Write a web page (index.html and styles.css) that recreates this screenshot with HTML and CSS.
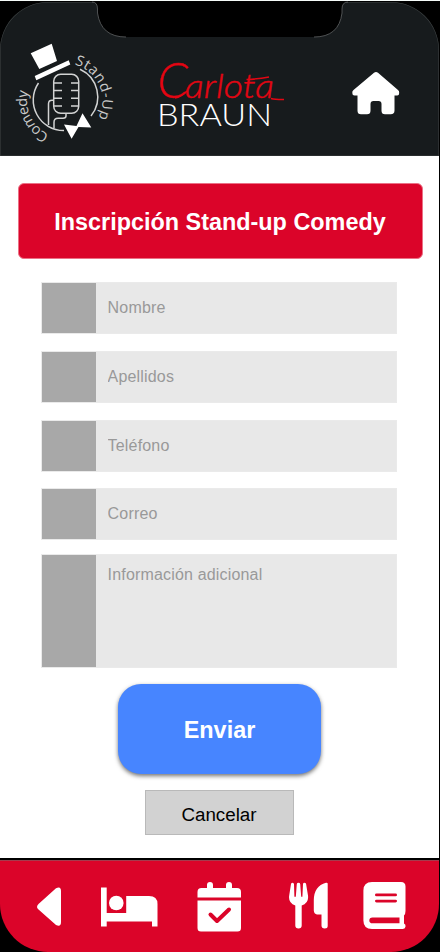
FILE: index.html
```html
<!DOCTYPE html>
<html lang="es">
<head>
<meta charset="utf-8">
<title>Inscripción Stand-up Comedy</title>
<link rel="stylesheet" href="styles.css">
</head>
<body>
<div class="phone">
  <header class="header">
    <svg class="comedy-logo" viewBox="10 35 110 115" aria-label="Stand-Up Comedy">
      <defs>
        <path id="arc-right" d="M74.500 64.500A37.500 37.500 0 0 1 96.500 121"/>
        <path id="arc-left" d="M49 134.500A38 38 0 0 1 29 88"/>
      </defs>
      <g fill="none" stroke="#d2d3d3" stroke-width="1.5">
        <path d="M80 69.2A30.5 30.5 0 0 1 91 116M64 130.6A30.5 30.5 0 0 1 38.5 83"/>
        <rect x="53.7" y="74.3" width="25" height="39" rx="7"/>
        <path d="M54 83h8M54 90.4h8M54 98.3h8M54 106h8M71 83h8M71 90.4h8M71 98.3h8M71 106h8"/>
        <path d="M54 100.3h-2q-3.5 0-3.5 3.5V125M66 113.5v2.500q0 2.200-3 2.200h-5q-4 0-4 4v6"/>
      </g>
      <g fill="#fff">
        <path d="M30.7 53.3 51.7 43.7 57 61 39.3 69ZM34.7 76 68.7 60.3 70.3 64.5 36.3 80.3Z"/>
        <path d="M64 124.5 76.5 126 82.5 113.3 91.3 127.4 78.5 127 71.6 138.8Z"/>
      </g>
      <text class="ring-text"><textPath href="#arc-right" textLength="67" lengthAdjust="spacing">Stand-Up</textPath></text>
      <text class="ring-text"><textPath href="#arc-left" textLength="52" lengthAdjust="spacing">Comedy</textPath></text>
    </svg>
    <svg class="brand" viewBox="155 55 132 76" aria-label="Carlota Braun">
      <text class="brand-first" y="98.300"><tspan class="brand-cap" x="157.500" textLength="31" lengthAdjust="spacingAndGlyphs">C</tspan><tspan class="brand-rest" x="185" textLength="89" lengthAdjust="spacingAndGlyphs">arlota</tspan></text>
      <path class="swash" d="M175 98Q181 97 187 91M271 98.500Q275 99.600 284 99.500M246.500 79.500Q258 79 269 77"/>
      <text class="brand-last" x="157" y="125.500" textLength="115" lengthAdjust="spacingAndGlyphs">BRAUN</text>
    </svg>
    <svg class="home" viewBox="352 71 48 44">
      <path fill="#fff" d="M374 72.7q2-1.6 4 0L398 90q1.4 1.2 1.2 3 0 2.5-2 2.500H394.500V110.500q0 3.800-3.800 3.800H385q-3.500 0-3.500-3.500V104q0-3-3-3H373.500q-3 0-3 3V110.800q0 3.500-3.500 3.500H361q-3.500 0-3.500-3.500V95.500H354.500q-2.200 0-2.200-2.500-.2-1.800 1.200-3Z"/>
    </svg>
    <svg class="notch" viewBox="0 0 256 38">
      <path d="M0 0H256V2Q250 2 250 9V13Q247 37 222 37H34Q9 37 5.500 13V9Q5.500 2 0 2Z" fill="#000"/>
      <path d="M0 2Q5.500 2 5.500 9V13Q9 37 34 37M222 37Q247 37 250 13V9Q250 2 256 2" fill="none" stroke="#6c6f70" stroke-width=".7"/>
    </svg>
  </header>
  <main class="content">
    <h1 class="title">Inscripción Stand-up Comedy</h1>
    <form class="form">
      <label class="field"><span class="swatch"></span><input type="text" placeholder="Nombre"></label>
      <label class="field"><span class="swatch"></span><input type="text" placeholder="Apellidos"></label>
      <label class="field"><span class="swatch"></span><input type="text" placeholder="Teléfono"></label>
      <label class="field"><span class="swatch"></span><input type="text" placeholder="Correo"></label>
      <label class="field area"><span class="swatch"></span><textarea placeholder="Información adicional"></textarea></label>
      <button class="send" type="button">Enviar</button>
      <button class="cancel" type="button">Cancelar</button>
    </form>
  </main>
  <nav class="tabs">
    <svg class="back" viewBox="37 887 24 39"><path fill="#fff" d="M56 888.300q5-2.500 5 2.700V922q0 5.500-5 3L38.500 909.500Q35.500 907 38.500 904Z"/></svg>
    <svg class="bed" viewBox="101 887 57 40"><path fill="#fff" d="M101 887.500h5.700V913h19.500V896H149q8.500 0 8.500 8V926.500H152V921.500H106.700V926.500H101Z"/><circle cx="116.300" cy="903" r="7.300" fill="#fff"/></svg>
    <svg class="calendar" viewBox="197 882 45 50"><path fill="#fff" d="M197.500 897.500V892q0-4 4-4H207V885q0-3 3-3t3 3v3h13v-3q0-3 3-3t3 3v3h5q4 0 4 4v5.500ZM197.500 900.500H241V928q0 3.500-3.500 3.500H201q-3.500 0-3.500-3.500Z"/><path d="M210.500 914.500l6.500 6.500L229 909.500" fill="none" stroke="#db0429" stroke-width="4" stroke-linecap="round" stroke-linejoin="round"/></svg>
    <svg class="cutlery" viewBox="289 882 39 47"><path fill="#fff" d="M291 884q.3-1.300 1.500-1.300 1.500 0 1.500 1.500l.4 12.500h1.400L296.800 884q.2-1.300 1.700-1.300t1.700 1.300L301.200 896.700h1.200L303 884q.1-1.300 1.500-1.300 1.300 0 1.600 1.300l1.900 11.500Q309 903 301.700 905.500V925.500q0 3-3.200 3t-3.200-3V905.500Q288 903 289.200 895.500ZM327.700 883.500V926q0 2.500-3 2.500-3.200 0-3.200-3V914.500H317q-3-.5-3.200-4V900Q314 886 326 882.700q1.700-.2 1.700.8Z"/></svg>
    <svg class="book" viewBox="363 882 43 47"><path fill="#fff" d="M372 882h29q4.500 0 4.500 4.500V911q0 3-1.500 4.500v8q2 1 1.500 3.200-.5 2.300-3 2.300H372q-8.600 0-8.600-8.500V890.500q0-8.500 8.600-8.500Z"/><path fill="#db0429" d="M376.500 893.500h19q1.500 0 1.500 1.400t-1.500 1.400h-19q-1.500 0-1.500-1.400t1.500-1.400ZM376.500 899.700h19q1.500 0 1.500 1.400t-1.500 1.400h-19q-1.500 0-1.500-1.400t1.500-1.400ZM372.500 917.500H399.500V923.300H372.500q-3.200-.2-3.200-2.900t3.200-2.900Z"/></svg>
  </nav>
</div>
</body>
</html>
```
FILE: styles.css
```css
* { box-sizing: border-box; }
body {
  margin: 0;
  background: #000;
  font-family: "Liberation Sans", Arial, sans-serif;
}
.phone {
  width: 440px;
  height: 952px;
  padding-right: 1px;
  border-top: 1px solid #f5faf8;
  display: flex;
  flex-direction: column;
  overflow: hidden;
}
svg { display: block; flex: none; }
.header {
  position: relative;
  height: 154px;
  flex: none;
  margin-top: 1px;
  display: flex;
  align-items: flex-start;
  padding-left: 10px;
  background: #171b1d;
  border-radius: 48px 48px 0 0;
  box-shadow: inset 0 0 0 .6px #3c4041;
}
.comedy-logo { width: 110px; height: 115px; margin-top: 33px; }
.ring-text {
  font-family: "Open Sans", sans-serif;
  font-size: 14.5px;
  font-weight: 400;
  fill: #c9caca;
}
.brand { width: 132px; height: 76px; margin: 53px 0 0 35px; overflow: visible; }
.brand-first {
  font-family: "Lato", sans-serif;
  font-style: italic;
  font-weight: 300;
  fill: #e30613;
  stroke: #e30613;
  stroke-width: .4;
}
.brand-cap { font-size: 49px; }
.brand-rest { font-size: 34px; }
.swash { fill: none; stroke: #e30613; stroke-width: 1.6; }
.brand-last {
  font-family: "Lato", sans-serif;
  font-size: 31px;
  font-weight: 300;
  fill: #fff;
}
.home { width: 48px; height: 44px; margin: 69px 0 0 65px; }
.notch {
  position: absolute;
  left: 92px;
  top: -2px;
  width: 256px;
  height: 38px;
}
.content {
  height: 702px;
  flex: none;
  padding: 27px 16px 0 18px;
  background: #fff;
}
.title {
  height: 76px;
  margin: 0;
  display: flex;
  align-items: center;
  justify-content: center;
  background: #db0429;
  border: 1px solid #eb7186;
  border-radius: 6px;
  color: #fff;
  font-size: 23.4px;
  line-height: 26px;
  white-space: nowrap;
  padding: 2px 1px 0 0;
}
.form {
  display: flex;
  flex-direction: column;
  align-items: center;
  padding: 23px 3px 0 0;
}
.field {
  width: 356px;
  height: 52px;
  margin-bottom: 17px;
  display: flex;
  background: #e8e8e8;
  border: 1px solid #eaeaea;
}
.field:nth-child(3) { margin-bottom: 16px; }
.field:nth-child(4) { margin-bottom: 14px; }
.swatch {
  width: 54px;
  flex: none;
  background: #a8a8a8;
}
.field input, .field textarea {
  flex: 1;
  min-width: 0;
  border: 0;
  margin: 0;
  padding: 0 11.6px;
  background: transparent;
  font: 16px "Liberation Sans", Arial, sans-serif;
  letter-spacing: .17px;
  resize: none;
}
.field ::placeholder { color: #999; opacity: 1; }
.area { height: 114px; margin-bottom: 16px; }
.field textarea { padding-top: 11px; }
.send {
  width: 203px;
  height: 90px;
  margin-left: 1px;
  border: 0;
  border-radius: 23px;
  background: #4785ff;
  color: #fff;
  font: bold 23.4px "Liberation Sans", Arial, sans-serif;
  padding: 3px 0 0;
  box-shadow: 0 2px 4px rgba(0, 0, 0, .55);
}
.cancel {
  width: 149px;
  height: 45px;
  margin-top: 16px;
  border: 1px solid #b9b9b9;
  background: #d2d2d2;
  color: #000;
  font: 18.8px "Liberation Sans", Arial, sans-serif;
  padding: 4px 0 0;
}
.tabs {
  flex: none;
  height: 92px;
  margin-top: 2px;
  padding-left: 37px;
  display: flex;
  align-items: flex-start;
  background: #db0429;
  border-top: 1px solid #a43b4d;
  border-radius: 0 0 48px 48px;
}
.back { width: 24px; height: 39px; margin-top: 26px; }
.bed { width: 57px; height: 40px; margin: 26px 0 0 40px; }
.calendar { width: 45px; height: 50px; margin: 21px 0 0 39px; }
.cutlery { width: 39px; height: 47px; margin: 21px 0 0 47px; }
.book { width: 43px; height: 47px; margin: 21px 0 0 35px; }
```
